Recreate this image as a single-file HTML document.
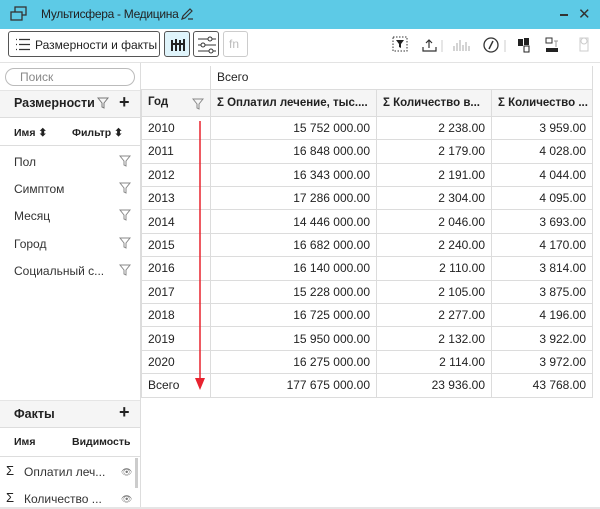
<html><head><style>
*{box-sizing:border-box;margin:0;padding:0}
body{width:600px;height:509px;overflow:hidden;font-family:"Liberation Sans",sans-serif;font-size:12px;color:#222;background:#fff;position:relative}
.abs{position:absolute}
.title{left:0;top:0;width:600px;height:29px;background:#5dcae6}
.btn{position:absolute;top:31px;height:26px;border:1px solid #555;border-radius:3px;background:#fff}
table{border-collapse:collapse;position:absolute;left:141px;top:66px;table-layout:fixed}
td{border:1px solid #dcdcdc;height:23.4px;padding:0 6px;font-size:12px;white-space:nowrap;overflow:hidden}
td.r{text-align:right}
.hd td{background:#f5f5f5;font-weight:bold;font-size:11.5px}
.li{position:absolute;left:14px;font-size:12px;color:#333;white-space:nowrap}
.fu{position:absolute;left:119px}
</style></head><body>
<div class="abs title"></div>
<svg class="abs" style="left:10px;top:6px" width="18" height="16"><rect x="5" y="1" width="11" height="8" fill="none" stroke="#333" stroke-width="1.3"/><rect x="1" y="6" width="11" height="8" fill="#5dcae6" stroke="#333" stroke-width="1.3"/></svg>
<div class="abs" style="left:41px;top:7px;font-size:12px;letter-spacing:-0.3px;color:#222;white-space:nowrap">Мультисфера - Медицина</div>
<svg class="abs" style="left:180px;top:7px" width="14" height="14"><path d="M2 12 L3 9 L10 2 L12 4 L5 11 Z M8 12 H13" fill="none" stroke="#333" stroke-width="1.2"/></svg>
<div class="abs" style="left:560px;top:14px;width:8px;height:1.5px;background:#333"></div>
<div class="abs" style="left:578px;top:5px;font-size:15px;color:#333">✕</div>
<div class="btn" style="left:8px;width:152px"><svg class="abs" style="left:6px;top:6px" width="16" height="13"><path d="M1 1.5h1M4 1.5h11M1 6.5h1M4 6.5h11M1 11.5h1M4 11.5h11" stroke="#333" stroke-width="1.3"/></svg><span class="abs" style="left:26px;top:6px;font-size:12px;white-space:nowrap">Размерности и факты</span></div>
<div class="btn" style="left:164px;width:26px;background:#dff4fb"><svg class="abs" style="left:5px;top:5px" width="16" height="16"><path d="M2 3v11M6 2v12M10 3v11M14 2v12M2 7h12" stroke="#222" stroke-width="2"/></svg></div>
<div class="btn" style="left:193px;width:26px"><svg class="abs" style="left:3px;top:4px" width="20" height="18"><path d="M1 3h18M1 9h18M1 15h18" stroke="#333"/><circle cx="13" cy="3" r="2" fill="#fff" stroke="#333"/><circle cx="6" cy="9" r="2" fill="#fff" stroke="#333"/><circle cx="14" cy="15" r="2" fill="#fff" stroke="#333"/></svg></div>
<div class="btn" style="left:223px;width:25px;border-color:#ccc;color:#bbb"><span class="abs" style="left:5px;top:5px;font-size:12px">fn</span></div>
<svg class="abs" style="left:392px;top:36px" width="200" height="18">
<rect x="1" y="1" width="14" height="14" fill="none" stroke="#333" stroke-dasharray="1.5 1.5"/><path d="M4 4h8l-3 4v4l-2-1v-3z" fill="#222"/>
<path d="M37 4v8M34 7l3-3 3 3M31 11v4h13v-4" fill="none" stroke="#333" stroke-width="1.2"/><path d="M50 4v12" stroke="#ccc"/>
<path d="M62 15v-5M65 15v-8M68 15v-11M71 15v-6M74 15v-9M77 15v-5" stroke="#aaa"/>
<circle cx="99" cy="9" r="7" fill="none" stroke="#333" stroke-width="1.3"/><path d="M101 5l-4 8" stroke="#333" stroke-width="1.5"/><path d="M113 4v12" stroke="#ccc"/>
<rect x="126" y="3" width="5" height="7" fill="#222"/><rect x="132" y="2" width="5" height="7" fill="#222"/><rect x="132" y="10" width="5" height="6" fill="none" stroke="#222"/>
<rect x="154" y="2" width="6" height="5" fill="none" stroke="#333"/><path d="M162 5h4M164 5v6" stroke="#999"/><rect x="154" y="12" width="12" height="4" fill="#222"/>
<rect x="188" y="2" width="8" height="13" fill="none" stroke="#ccc"/><circle cx="192" cy="5" r="3" fill="none" stroke="#ccc"/>
</svg>
<div class="abs" style="left:0;top:62px;width:600px;height:1px;background:#e3e3e3"></div>
<div class="abs" style="left:140px;top:63px;width:1px;height:446px;background:#ddd"></div>
<div class="abs" style="left:5px;top:68px;width:130px;height:18px;border:1px solid #bbb;border-radius:9px"><span class="abs" style="left:14px;top:1px;color:#888">Поиск</span></div>
<div class="abs" style="left:0;top:90px;width:140px;height:27px;background:#f5f5f5;border-top:1px solid #e5e5e5"></div>
<div class="abs" style="left:14px;top:96px;font-weight:bold;font-size:12.5px">Размерности</div>
<svg class="abs" style="left:97px;top:97px" width="12" height="12"><path d="M1 1h10l-4 5v5l-2-1v-4z" fill="none" stroke="#777"/></svg>
<div class="abs" style="left:119px;top:92px;font-size:18px;font-weight:bold">+</div>
<div class="abs" style="left:0;top:117px;width:140px;height:1px;background:#ddd"></div>
<div class="abs" style="left:14px;top:127px;font-size:10.5px;font-weight:bold">Имя ⬍</div>
<div class="abs" style="left:72px;top:127px;font-size:10.5px;font-weight:bold">Фильтр ⬍</div>
<div class="abs" style="left:0;top:145px;width:140px;height:1px;background:#ddd"></div>
<div class="li" style="top:155px">Пол</div><div class="li" style="top:182px">Симптом</div><div class="li" style="top:209px">Месяц</div><div class="li" style="top:237px">Город</div><div class="li" style="top:264px">Социальный с...</div>
<svg class="fu" style="top:155px" width="12" height="130"><g fill="none" stroke="#888"><path d="M1 1h10l-4 5v5l-2-1v-4z"/><path d="M1 28h10l-4 5v5l-2-1v-4z"/><path d="M1 55h10l-4 5v5l-2-1v-4z"/><path d="M1 83h10l-4 5v5l-2-1v-4z"/><path d="M1 110h10l-4 5v5l-2-1v-4z"/></g></svg>
<div class="abs" style="left:0;top:400px;width:140px;height:28px;background:#f5f5f5;border-top:1px solid #e5e5e5;border-bottom:1px solid #ddd"></div>
<div class="abs" style="left:14px;top:407px;font-weight:bold;font-size:12.5px">Факты</div>
<div class="abs" style="left:119px;top:402px;font-size:18px;font-weight:bold">+</div>
<div class="abs" style="left:14px;top:436px;font-size:10.5px;font-weight:bold">Имя</div>
<div class="abs" style="left:72px;top:436px;font-size:10.5px;font-weight:bold">Видимость</div>
<div class="abs" style="left:0;top:456px;width:140px;height:1px;background:#ddd"></div>
<div class="abs" style="left:6px;top:463px;font-size:13px">Σ</div><div class="li" style="left:24px;top:465px">Оплатил леч...</div>
<div class="abs" style="left:6px;top:490px;font-size:13px">Σ</div><div class="li" style="left:24px;top:492px">Количество ...</div>
<div class="abs" style="left:121px;top:467px;font-size:9px;color:#777">👁</div>
<div class="abs" style="left:121px;top:494px;font-size:9px;color:#777">👁</div>
<div class="abs" style="left:135px;top:458px;width:3px;height:30px;background:#ccc"></div>
<div class="abs" style="left:0;top:507px;width:600px;height:2px;background:#e5e5e5"></div>
<table style="width:451px">
<colgroup><col style="width:69px"><col style="width:166px"><col style="width:115px"><col style="width:101px"></colgroup>
<tr style="height:22px"><td style="border-top:none;border-left:none"></td><td colspan="3" style="border-top:none">Всего</td></tr>
<tr class="hd" style="height:27px"><td>Год<svg style="float:right;margin-top:2px" width="12" height="12"><path d="M1 1h10l-4 5v5l-2-1v-4z" fill="none" stroke="#888"/></svg></td><td>Σ Оплатил лечение, тыс....</td><td>Σ Количество в...</td><td>Σ Количество ...</td></tr>
<tr><td>2010</td><td class="r">15 752 000.00</td><td class="r">2 238.00</td><td class="r">3 959.00</td></tr>
<tr><td>2011</td><td class="r">16 848 000.00</td><td class="r">2 179.00</td><td class="r">4 028.00</td></tr>
<tr><td>2012</td><td class="r">16 343 000.00</td><td class="r">2 191.00</td><td class="r">4 044.00</td></tr>
<tr><td>2013</td><td class="r">17 286 000.00</td><td class="r">2 304.00</td><td class="r">4 095.00</td></tr>
<tr><td>2014</td><td class="r">14 446 000.00</td><td class="r">2 046.00</td><td class="r">3 693.00</td></tr>
<tr><td>2015</td><td class="r">16 682 000.00</td><td class="r">2 240.00</td><td class="r">4 170.00</td></tr>
<tr><td>2016</td><td class="r">16 140 000.00</td><td class="r">2 110.00</td><td class="r">3 814.00</td></tr>
<tr><td>2017</td><td class="r">15 228 000.00</td><td class="r">2 105.00</td><td class="r">3 875.00</td></tr>
<tr><td>2018</td><td class="r">16 725 000.00</td><td class="r">2 277.00</td><td class="r">4 196.00</td></tr>
<tr><td>2019</td><td class="r">15 950 000.00</td><td class="r">2 132.00</td><td class="r">3 922.00</td></tr>
<tr><td>2020</td><td class="r">16 275 000.00</td><td class="r">2 114.00</td><td class="r">3 972.00</td></tr>
<tr><td>Всего</td><td class="r">177 675 000.00</td><td class="r">23 936.00</td><td class="r">43 768.00</td></tr>
</table>
<svg class="abs" style="left:193px;top:120px" width="14" height="272"><path d="M7 1V262" stroke="#e8232f" stroke-width="1.5"/><path d="M2 258L7 270L12 258Z" fill="#e8232f"/></svg>
</body></html>
